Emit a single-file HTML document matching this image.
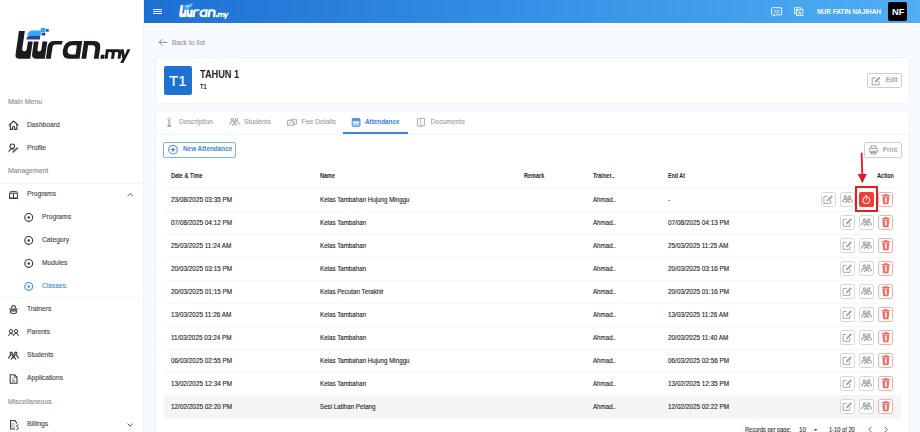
<!DOCTYPE html>
<html><head><meta charset="utf-8"><style>
html,body{margin:0;padding:0;width:920px;height:432px;overflow:hidden;background:#fff;}
body{position:relative;font-family:"Liberation Sans", sans-serif;}
.t{position:absolute;white-space:nowrap;}
.t.r{-webkit-text-stroke:0.12px currentColor;}
.b{position:absolute;}
</style></head><body>
<div id="root" style="position:relative;width:920px;height:432px;overflow:hidden;">
<div class="b" style="left:0px;top:0px;width:143px;height:432px;background:#fff;"></div>
<svg width="0" height="0" style="position:absolute"><defs>
<symbol id="logo" overflow="visible">
<g transform="translate(0,58.8) skewX(-8.3) translate(0,-58.8)">
<path d="M14.9,31 L20.8,31 L20.8,48.6 Q20.8,51.3 23.1,51.3 Q25.4,51.3 25.4,48.6 L25.4,41.6 L30.2,41.6 L30.2,58.8 L19.4,58.8 Q14.9,58.8 14.9,54.3 Z"/>
<path d="M31.4,41.6 L36.1,41.6 L36.1,49.2 Q36.1,51.6 38.05,51.6 Q40,51.6 40,49.2 L40,41.6 L44.8,41.6 L44.8,58.8 L36.4,58.8 Q31.4,58.8 31.4,53.8 Z"/>
<path d="M45.8,58.8 L45.8,46.6 Q45.8,40.9 51.5,40.9 L60.2,40.9 L59.6,44.6 L53.6,44.6 Q50.8,44.6 50.8,47.4 L50.8,58.8 Z"/>
<path fill-rule="evenodd" d="M79.6,40.9 L79.6,58.8 L69.4,58.8 Q61.6,58.8 61.6,50 Q61.6,40.9 70.4,40.9 Z M70.6,45.3 L74.9,45.3 L74.9,54.4 L70.4,54.4 Q66.3,54.4 66.3,49.85 Q66.3,45.3 70.6,45.3 Z"/>
<path d="M81.4,58.8 L81.4,40.9 L91.4,40.9 Q98.6,40.9 98.6,48.1 L98.6,58.8 L93.8,58.8 L93.8,48.8 Q93.8,45.3 90.3,45.3 L86.2,45.3 L86.2,58.8 Z"/>
<rect x="100.3" y="54.7" width="3.8" height="4.1" rx="0.6"/>
<path d="M104.6,58.8 L104.6,49.2 L116.6,49.2 Q120.5,49.2 120.5,53.1 L120.5,58.8 L117.5,58.8 L117.5,53.6 Q117.5,52.1 116,52.1 L114,52.1 L114,58.8 L111,58.8 L111,53.6 Q111,52.1 109.5,52.1 L107.6,52.1 L107.6,58.8 Z"/>
</g>
<path d="M120.4,49.2 L123.6,49.2 L124.7,55.3 L127.4,49.2 L130.5,49.2 L123.4,62.9 L120.2,62.9 L122.4,58.8 Z"/>
<path d="M32.6,30.4 L40.8,30.4 L40.8,28 L45.5,28 L45.5,32 L41,32 L41,35.5 L27,35.5 Q28.2,30.4 32.6,30.4 Z" style="fill:var(--c1);stroke:none"/>
<path d="M30.6,35.6 L40,35.6 L40,39.6 L26.2,39.6 Q27,35.6 30.6,35.6 Z" style="fill:var(--c2);stroke:none"/>
<rect x="41.6" y="32.6" width="3.7" height="2.9" style="fill:var(--c2);stroke:none"/>
<rect x="46" y="29.2" width="2.7" height="2.4" style="fill:var(--c3);stroke:none"/>
</symbol></defs></svg>
<svg class="b" style="left:0;top:0" width="143" height="80" viewBox="0 0 143 80"><use href="#logo" fill="#1c1a1e" style="--c1:#2aaef0;--c2:#2b40ad;--c3:#1d3a9c"/></svg>
<div class="t r" style="left:8px;top:95.80px;font-size:6.9px;line-height:12px;color:#8c8c8c;font-weight:400;">Main Menu</div>
<div class="t r" style="left:27px;top:118.50px;font-size:6.7px;line-height:12px;color:#474747;font-weight:400;">Dashboard</div>
<div class="t r" style="left:27px;top:141.50px;font-size:6.7px;line-height:12px;color:#474747;font-weight:400;">Profile</div>
<div class="t r" style="left:8px;top:165.30px;font-size:6.9px;line-height:12px;color:#8c8c8c;font-weight:400;">Management</div>
<div class="b" style="left:0px;top:183px;width:143px;height:1px;background:#f3f5f7;"></div>
<div class="t r" style="left:27px;top:188.40px;font-size:6.7px;line-height:12px;color:#474747;font-weight:400;">Programs</div>
<div class="t r" style="left:42px;top:211.40px;font-size:6.7px;line-height:12px;color:#474747;font-weight:400;">Programs</div>
<div class="t r" style="left:42px;top:234.40px;font-size:6.7px;line-height:12px;color:#474747;font-weight:400;">Category</div>
<div class="t r" style="left:42px;top:257.40px;font-size:6.7px;line-height:12px;color:#474747;font-weight:400;">Modules</div>
<div class="t r" style="left:42px;top:280.40px;font-size:6.7px;line-height:12px;color:#3d8fe0;font-weight:400;">Classes.</div>
<div class="b" style="left:0px;top:297px;width:143px;height:1px;background:#f3f5f7;"></div>
<div class="t r" style="left:27px;top:303.30px;font-size:6.7px;line-height:12px;color:#474747;font-weight:400;">Trainers</div>
<div class="t r" style="left:27px;top:326.30px;font-size:6.7px;line-height:12px;color:#474747;font-weight:400;">Parents</div>
<div class="t r" style="left:27px;top:349.30px;font-size:6.7px;line-height:12px;color:#474747;font-weight:400;">Students</div>
<div class="t r" style="left:27px;top:372.30px;font-size:6.7px;line-height:12px;color:#474747;font-weight:400;">Applications</div>
<div class="t r" style="left:8px;top:395.50px;font-size:6.9px;line-height:12px;color:#8c8c8c;font-weight:400;">Miscellaneous</div>
<div class="t r" style="left:27px;top:418.40px;font-size:6.7px;line-height:12px;color:#474747;font-weight:400;">Billings</div>
<div class="b" style="left:143px;top:0px;width:777px;height:432px;background:#f7fafe;"></div>
<div class="b" style="left:143px;top:0px;width:1px;height:432px;background:#eef1f5;"></div>
<div class="b" style="left:144px;top:0px;width:776px;height:23px;background:linear-gradient(90deg,#1d70d3 0%,#3591e5 50%,#50adf4 100%);"></div>
<div class="b" style="left:144px;top:23px;width:776px;height:1.5px;background:#ffffff;"></div>
<div class="b" style="left:153px;top:8.5px;width:9px;height:1.3999999999999986px;background:rgba(255,255,255,0.92);"></div>
<div class="b" style="left:153px;top:10.8px;width:9px;height:1.3999999999999986px;background:rgba(255,255,255,0.92);"></div>
<div class="b" style="left:153px;top:13.100000000000001px;width:9px;height:1.3999999999999986px;background:rgba(255,255,255,0.92);"></div>
<svg class="b" style="left:0;top:0" width="300" height="23" viewBox="0 0 300 23"><g transform="translate(172.6,-8.2) scale(0.43)"><use href="#logo" fill="#fff" stroke="#fff" stroke-width="0.6" style="--c1:#7fd0fa;--c2:#5fb8f5;--c3:#5fb8f5"/></g></svg>
<div class="t" style="left:817px;top:5.50px;font-size:6.5px;line-height:12px;color:#fff;font-weight:700;transform:scaleX(0.9849);transform-origin:0 0;">NUR FATIN NAJIHAH</div>
<div class="b" style="left:888.4px;top:1.9px;width:19.0px;height:19.0px;background:#000;border-radius:2px;"></div>
<div class="t" style="left:891.9px;top:5.80px;font-size:9.9px;line-height:12px;color:#fff;font-weight:700;transform:scaleX(0.9397);transform-origin:0 0;">NF</div>
<div class="t r" style="left:171.7px;top:36.80px;font-size:6.9px;line-height:12px;color:#9a9a9a;font-weight:400;">Back to list</div>
<div class="b" style="left:156px;top:58px;width:753px;height:44.5px;background:#fff;border-radius:3px;box-shadow:0 0 0 0.6px #e9edf2;"></div>
<div class="b" style="left:164px;top:66px;width:28px;height:29px;background:#1e73d2;border-radius:2px;"></div>
<div class="t r" style="left:169px;top:72.50px;font-size:15px;line-height:16px;color:#fff;font-weight:400;">T1</div>
<div class="t" style="left:200.4px;top:68.80px;font-size:10.2px;line-height:12px;color:#1f1f1f;font-weight:700;transform:scaleX(0.9);transform-origin:0 0;">TAHUN 1</div>
<div class="t" style="left:200.2px;top:80.90px;font-size:6.6px;line-height:12px;color:#2a2a2a;font-weight:700;transform:scaleX(0.8440);transform-origin:0 0;">T1</div>
<div class="b" style="left:866.5px;top:73px;width:35.0px;height:15px;border:1px solid #cfcfcf;border-radius:2px;box-sizing:border-box;"></div>
<div class="t" style="left:885.8px;top:74.20px;font-size:6.3px;line-height:12px;color:#a6a6a6;font-weight:700;">Edit</div>
<div class="b" style="left:156px;top:111px;width:753px;height:321px;background:#fff;border-radius:3px 3px 0 0;box-shadow:0 0 0 0.6px #e9edf2;"></div>
<div class="b" style="left:156px;top:133.5px;width:753px;height:1.0px;background:#f1f3f6;"></div>
<div class="t r" style="left:179px;top:116.30px;font-size:6.8px;line-height:12px;color:#a0a0a0;font-weight:400;">Description</div>
<div class="t r" style="left:244px;top:116.30px;font-size:6.8px;line-height:12px;color:#a0a0a0;font-weight:400;">Students</div>
<div class="t r" style="left:301.5px;top:116.30px;font-size:6.8px;line-height:12px;color:#a0a0a0;font-weight:400;">Fee Details</div>
<div class="t" style="left:365px;top:116.30px;font-size:6.5px;line-height:12px;color:#2f7fd8;font-weight:700;transform:scaleX(0.9720);transform-origin:0 0;">Attendance</div>
<div class="t r" style="left:430.5px;top:116.30px;font-size:6.8px;line-height:12px;color:#a0a0a0;font-weight:400;">Documents</div>
<div class="b" style="left:343px;top:132px;width:65px;height:2px;background:#3684dc;"></div>
<div class="b" style="left:163px;top:142px;width:73px;height:15.5px;border:1px solid #7fb2ec;border-radius:2px;box-sizing:border-box;"></div>
<div class="t" style="left:182.8px;top:143.40px;font-size:6.6px;line-height:12px;color:#3a88de;font-weight:700;transform:scaleX(0.9649);transform-origin:0 0;">New Attendance</div>
<div class="b" style="left:864px;top:142px;width:37.5px;height:15.5px;border:1px solid #cfcfcf;border-radius:2px;box-sizing:border-box;"></div>
<div class="t" style="left:882.8px;top:143.60px;font-size:6.3px;line-height:12px;color:#a6a6a6;font-weight:700;">Print</div>
<div class="t" style="left:170.8px;top:170.00px;font-size:6.4px;line-height:12px;color:#262626;font-weight:700;transform:scaleX(0.8598);transform-origin:0 0;">Date &amp; Time</div>
<div class="t" style="left:320.4px;top:170.00px;font-size:6.4px;line-height:12px;color:#262626;font-weight:700;transform:scaleX(0.8720);transform-origin:0 0;">Name</div>
<div class="t" style="left:524.4px;top:170.00px;font-size:6.4px;line-height:12px;color:#262626;font-weight:700;transform:scaleX(0.8645);transform-origin:0 0;">Remark</div>
<div class="t" style="left:593px;top:170.00px;font-size:6.4px;line-height:12px;color:#262626;font-weight:700;transform:scaleX(0.8718);transform-origin:0 0;">Trainer..</div>
<div class="t" style="left:668px;top:170.00px;font-size:6.4px;line-height:12px;color:#262626;font-weight:700;transform:scaleX(0.8341);transform-origin:0 0;">End At</div>
<div class="t" style="right:26px;top:170.00px;font-size:6.4px;line-height:12px;color:#262626;font-weight:700;transform:scaleX(0.8539);transform-origin:100% 0;">Action</div>
<div class="b" style="left:164px;top:187.5px;width:737px;height:1.0px;background:#f5f5f5;"></div>
<div class="b" style="left:164px;top:210.5px;width:737px;height:1.0px;background:#f6f6f6;"></div>
<div class="t r" style="left:171px;top:193.50px;font-size:6.4px;line-height:12px;color:#1e1e1e;font-weight:400;">23/08/2025 03:35 PM</div>
<div class="t r" style="left:320.4px;top:193.50px;font-size:7px;line-height:12px;color:#1e1e1e;font-weight:400;transform:scaleX(0.8860);transform-origin:0 0;">Kelas Tambahan Hujung Minggu</div>
<div class="t r" style="left:593px;top:193.50px;font-size:7px;line-height:12px;color:#1e1e1e;font-weight:400;transform:scaleX(0.8823);transform-origin:0 0;">Ahmad..</div>
<div class="t r" style="left:668px;top:193.50px;font-size:6.4px;line-height:12px;color:#1e1e1e;font-weight:400;">-</div>
<div class="b" style="left:820.5px;top:191.55px;width:15.299999999999955px;height:15.300000000000011px;background:#fff;border:1.2px solid #d6d6d6;border-radius:2.5px;box-sizing:border-box;"></div>
<div class="b" style="left:839.7px;top:191.55px;width:15.299999999999955px;height:15.300000000000011px;background:#fff;border:1.2px solid #d6d6d6;border-radius:2.5px;box-sizing:border-box;"></div>
<div class="b" style="left:858.8px;top:191.55px;width:15.299999999999955px;height:15.300000000000011px;background:#ea4036;border-radius:2px;"></div>
<div class="b" style="left:878px;top:191.55px;width:15.299999999999955px;height:15.300000000000011px;background:#fff;border:1.2px solid #f7aaa6;border-radius:2.5px;box-sizing:border-box;"></div>
<div class="b" style="left:164px;top:233.5px;width:737px;height:1.0px;background:#f6f6f6;"></div>
<div class="t r" style="left:171px;top:216.50px;font-size:6.4px;line-height:12px;color:#1e1e1e;font-weight:400;">07/08/2025 04:12 PM</div>
<div class="t r" style="left:320.4px;top:216.50px;font-size:7px;line-height:12px;color:#1e1e1e;font-weight:400;transform:scaleX(0.8860);transform-origin:0 0;">Kelas Tambahan</div>
<div class="t r" style="left:593px;top:216.50px;font-size:7px;line-height:12px;color:#1e1e1e;font-weight:400;transform:scaleX(0.8823);transform-origin:0 0;">Ahmad..</div>
<div class="t r" style="left:668px;top:216.50px;font-size:6.4px;line-height:12px;color:#1e1e1e;font-weight:400;">07/08/2025 04:13 PM</div>
<div class="b" style="left:839.7px;top:214.55px;width:15.299999999999955px;height:15.300000000000011px;background:#fff;border:1.2px solid #d6d6d6;border-radius:2.5px;box-sizing:border-box;"></div>
<div class="b" style="left:858.8px;top:214.55px;width:15.299999999999955px;height:15.300000000000011px;background:#fff;border:1.2px solid #d6d6d6;border-radius:2.5px;box-sizing:border-box;"></div>
<div class="b" style="left:878px;top:214.55px;width:15.299999999999955px;height:15.300000000000011px;background:#fff;border:1.2px solid #f7aaa6;border-radius:2.5px;box-sizing:border-box;"></div>
<div class="b" style="left:164px;top:256.5px;width:737px;height:1.0px;background:#f6f6f6;"></div>
<div class="t r" style="left:171px;top:239.50px;font-size:6.4px;line-height:12px;color:#1e1e1e;font-weight:400;">25/03/2025 11:24 AM</div>
<div class="t r" style="left:320.4px;top:239.50px;font-size:7px;line-height:12px;color:#1e1e1e;font-weight:400;transform:scaleX(0.8860);transform-origin:0 0;">Kelas Tambahan</div>
<div class="t r" style="left:593px;top:239.50px;font-size:7px;line-height:12px;color:#1e1e1e;font-weight:400;transform:scaleX(0.8823);transform-origin:0 0;">Ahmad..</div>
<div class="t r" style="left:668px;top:239.50px;font-size:6.4px;line-height:12px;color:#1e1e1e;font-weight:400;">25/03/2025 11:25 AM</div>
<div class="b" style="left:839.7px;top:237.55px;width:15.299999999999955px;height:15.300000000000011px;background:#fff;border:1.2px solid #d6d6d6;border-radius:2.5px;box-sizing:border-box;"></div>
<div class="b" style="left:858.8px;top:237.55px;width:15.299999999999955px;height:15.300000000000011px;background:#fff;border:1.2px solid #d6d6d6;border-radius:2.5px;box-sizing:border-box;"></div>
<div class="b" style="left:878px;top:237.55px;width:15.299999999999955px;height:15.300000000000011px;background:#fff;border:1.2px solid #f7aaa6;border-radius:2.5px;box-sizing:border-box;"></div>
<div class="b" style="left:164px;top:279.5px;width:737px;height:1.0px;background:#f6f6f6;"></div>
<div class="t r" style="left:171px;top:262.50px;font-size:6.4px;line-height:12px;color:#1e1e1e;font-weight:400;">20/03/2025 03:15 PM</div>
<div class="t r" style="left:320.4px;top:262.50px;font-size:7px;line-height:12px;color:#1e1e1e;font-weight:400;transform:scaleX(0.8860);transform-origin:0 0;">Kelas Tambahan</div>
<div class="t r" style="left:593px;top:262.50px;font-size:7px;line-height:12px;color:#1e1e1e;font-weight:400;transform:scaleX(0.8823);transform-origin:0 0;">Ahmad..</div>
<div class="t r" style="left:668px;top:262.50px;font-size:6.4px;line-height:12px;color:#1e1e1e;font-weight:400;">20/03/2025 03:16 PM</div>
<div class="b" style="left:839.7px;top:260.55px;width:15.299999999999955px;height:15.300000000000011px;background:#fff;border:1.2px solid #d6d6d6;border-radius:2.5px;box-sizing:border-box;"></div>
<div class="b" style="left:858.8px;top:260.55px;width:15.299999999999955px;height:15.300000000000011px;background:#fff;border:1.2px solid #d6d6d6;border-radius:2.5px;box-sizing:border-box;"></div>
<div class="b" style="left:878px;top:260.55px;width:15.299999999999955px;height:15.300000000000011px;background:#fff;border:1.2px solid #f7aaa6;border-radius:2.5px;box-sizing:border-box;"></div>
<div class="b" style="left:164px;top:302.5px;width:737px;height:1.0px;background:#f6f6f6;"></div>
<div class="t r" style="left:171px;top:285.50px;font-size:6.4px;line-height:12px;color:#1e1e1e;font-weight:400;">20/03/2025 01:15 PM</div>
<div class="t r" style="left:320.4px;top:285.50px;font-size:7px;line-height:12px;color:#1e1e1e;font-weight:400;transform:scaleX(0.8860);transform-origin:0 0;">Kelas Pecutan Terakhir</div>
<div class="t r" style="left:593px;top:285.50px;font-size:7px;line-height:12px;color:#1e1e1e;font-weight:400;transform:scaleX(0.8823);transform-origin:0 0;">Ahmad..</div>
<div class="t r" style="left:668px;top:285.50px;font-size:6.4px;line-height:12px;color:#1e1e1e;font-weight:400;">20/03/2025 01:16 PM</div>
<div class="b" style="left:839.7px;top:283.55px;width:15.299999999999955px;height:15.300000000000011px;background:#fff;border:1.2px solid #d6d6d6;border-radius:2.5px;box-sizing:border-box;"></div>
<div class="b" style="left:858.8px;top:283.55px;width:15.299999999999955px;height:15.300000000000011px;background:#fff;border:1.2px solid #d6d6d6;border-radius:2.5px;box-sizing:border-box;"></div>
<div class="b" style="left:878px;top:283.55px;width:15.299999999999955px;height:15.300000000000011px;background:#fff;border:1.2px solid #f7aaa6;border-radius:2.5px;box-sizing:border-box;"></div>
<div class="b" style="left:164px;top:325.5px;width:737px;height:1.0px;background:#f6f6f6;"></div>
<div class="t r" style="left:171px;top:308.50px;font-size:6.4px;line-height:12px;color:#1e1e1e;font-weight:400;">13/03/2025 11:26 AM</div>
<div class="t r" style="left:320.4px;top:308.50px;font-size:7px;line-height:12px;color:#1e1e1e;font-weight:400;transform:scaleX(0.8860);transform-origin:0 0;">Kelas Tambahan</div>
<div class="t r" style="left:593px;top:308.50px;font-size:7px;line-height:12px;color:#1e1e1e;font-weight:400;transform:scaleX(0.8823);transform-origin:0 0;">Ahmad..</div>
<div class="t r" style="left:668px;top:308.50px;font-size:6.4px;line-height:12px;color:#1e1e1e;font-weight:400;">13/03/2025 11:26 AM</div>
<div class="b" style="left:839.7px;top:306.55px;width:15.299999999999955px;height:15.300000000000011px;background:#fff;border:1.2px solid #d6d6d6;border-radius:2.5px;box-sizing:border-box;"></div>
<div class="b" style="left:858.8px;top:306.55px;width:15.299999999999955px;height:15.300000000000011px;background:#fff;border:1.2px solid #d6d6d6;border-radius:2.5px;box-sizing:border-box;"></div>
<div class="b" style="left:878px;top:306.55px;width:15.299999999999955px;height:15.300000000000011px;background:#fff;border:1.2px solid #f7aaa6;border-radius:2.5px;box-sizing:border-box;"></div>
<div class="b" style="left:164px;top:348.5px;width:737px;height:1.0px;background:#f6f6f6;"></div>
<div class="t r" style="left:171px;top:331.50px;font-size:6.4px;line-height:12px;color:#1e1e1e;font-weight:400;">11/03/2025 03:24 PM</div>
<div class="t r" style="left:320.4px;top:331.50px;font-size:7px;line-height:12px;color:#1e1e1e;font-weight:400;transform:scaleX(0.8860);transform-origin:0 0;">Kelas Tambahan</div>
<div class="t r" style="left:593px;top:331.50px;font-size:7px;line-height:12px;color:#1e1e1e;font-weight:400;transform:scaleX(0.8823);transform-origin:0 0;">Ahmad..</div>
<div class="t r" style="left:668px;top:331.50px;font-size:6.4px;line-height:12px;color:#1e1e1e;font-weight:400;">20/03/2025 11:40 AM</div>
<div class="b" style="left:839.7px;top:329.55px;width:15.299999999999955px;height:15.300000000000011px;background:#fff;border:1.2px solid #d6d6d6;border-radius:2.5px;box-sizing:border-box;"></div>
<div class="b" style="left:858.8px;top:329.55px;width:15.299999999999955px;height:15.300000000000011px;background:#fff;border:1.2px solid #d6d6d6;border-radius:2.5px;box-sizing:border-box;"></div>
<div class="b" style="left:878px;top:329.55px;width:15.299999999999955px;height:15.300000000000011px;background:#fff;border:1.2px solid #f7aaa6;border-radius:2.5px;box-sizing:border-box;"></div>
<div class="b" style="left:164px;top:371.5px;width:737px;height:1.0px;background:#f6f6f6;"></div>
<div class="t r" style="left:171px;top:354.50px;font-size:6.4px;line-height:12px;color:#1e1e1e;font-weight:400;">06/03/2025 02:55 PM</div>
<div class="t r" style="left:320.4px;top:354.50px;font-size:7px;line-height:12px;color:#1e1e1e;font-weight:400;transform:scaleX(0.8860);transform-origin:0 0;">Kelas Tambahan Hujung Minggu</div>
<div class="t r" style="left:593px;top:354.50px;font-size:7px;line-height:12px;color:#1e1e1e;font-weight:400;transform:scaleX(0.8823);transform-origin:0 0;">Ahmad..</div>
<div class="t r" style="left:668px;top:354.50px;font-size:6.4px;line-height:12px;color:#1e1e1e;font-weight:400;">06/03/2025 02:56 PM</div>
<div class="b" style="left:839.7px;top:352.55px;width:15.299999999999955px;height:15.300000000000011px;background:#fff;border:1.2px solid #d6d6d6;border-radius:2.5px;box-sizing:border-box;"></div>
<div class="b" style="left:858.8px;top:352.55px;width:15.299999999999955px;height:15.300000000000011px;background:#fff;border:1.2px solid #d6d6d6;border-radius:2.5px;box-sizing:border-box;"></div>
<div class="b" style="left:878px;top:352.55px;width:15.299999999999955px;height:15.300000000000011px;background:#fff;border:1.2px solid #f7aaa6;border-radius:2.5px;box-sizing:border-box;"></div>
<div class="b" style="left:164px;top:394.5px;width:737px;height:1.0px;background:#f6f6f6;"></div>
<div class="t r" style="left:171px;top:377.50px;font-size:6.4px;line-height:12px;color:#1e1e1e;font-weight:400;">13/02/2025 12:34 PM</div>
<div class="t r" style="left:320.4px;top:377.50px;font-size:7px;line-height:12px;color:#1e1e1e;font-weight:400;transform:scaleX(0.8860);transform-origin:0 0;">Kelas Tambahan</div>
<div class="t r" style="left:593px;top:377.50px;font-size:7px;line-height:12px;color:#1e1e1e;font-weight:400;transform:scaleX(0.8823);transform-origin:0 0;">Ahmad..</div>
<div class="t r" style="left:668px;top:377.50px;font-size:6.4px;line-height:12px;color:#1e1e1e;font-weight:400;">13/02/2025 12:35 PM</div>
<div class="b" style="left:839.7px;top:375.55px;width:15.299999999999955px;height:15.300000000000011px;background:#fff;border:1.2px solid #d6d6d6;border-radius:2.5px;box-sizing:border-box;"></div>
<div class="b" style="left:858.8px;top:375.55px;width:15.299999999999955px;height:15.300000000000011px;background:#fff;border:1.2px solid #d6d6d6;border-radius:2.5px;box-sizing:border-box;"></div>
<div class="b" style="left:878px;top:375.55px;width:15.299999999999955px;height:15.300000000000011px;background:#fff;border:1.2px solid #f7aaa6;border-radius:2.5px;box-sizing:border-box;"></div>
<div class="b" style="left:163.5px;top:395px;width:737.5px;height:23.5px;background:#f5f5f5;"></div>
<div class="t r" style="left:171px;top:400.50px;font-size:6.4px;line-height:12px;color:#1e1e1e;font-weight:400;">12/02/2025 02:20 PM</div>
<div class="t r" style="left:320.4px;top:400.50px;font-size:7px;line-height:12px;color:#1e1e1e;font-weight:400;transform:scaleX(0.8860);transform-origin:0 0;">Sesi Latihan Petang</div>
<div class="t r" style="left:593px;top:400.50px;font-size:7px;line-height:12px;color:#1e1e1e;font-weight:400;transform:scaleX(0.8823);transform-origin:0 0;">Ahmad..</div>
<div class="t r" style="left:668px;top:400.50px;font-size:6.4px;line-height:12px;color:#1e1e1e;font-weight:400;">12/02/2025 02:22 PM</div>
<div class="b" style="left:839.7px;top:398.55px;width:15.299999999999955px;height:15.300000000000011px;background:#fff;border:1.2px solid #d6d6d6;border-radius:2.5px;box-sizing:border-box;"></div>
<div class="b" style="left:858.8px;top:398.55px;width:15.299999999999955px;height:15.300000000000011px;background:#fff;border:1.2px solid #d6d6d6;border-radius:2.5px;box-sizing:border-box;"></div>
<div class="b" style="left:878px;top:398.55px;width:15.299999999999955px;height:15.300000000000011px;background:#fff;border:1.2px solid #f7aaa6;border-radius:2.5px;box-sizing:border-box;"></div>
<div class="b" style="left:855px;top:186.2px;width:23px;height:25.600000000000023px;border:2.2px solid #dc1f27;box-sizing:border-box;"></div>
<div class="t r" style="left:745.2px;top:423.80px;font-size:6.3px;line-height:12px;color:#333;font-weight:400;transform:scaleX(0.8895);transform-origin:0 0;">Records per page:</div>
<div class="t r" style="left:799.4px;top:423.60px;font-size:6.8px;line-height:12px;color:#333;font-weight:400;transform:scaleX(0.9256);transform-origin:0 0;">10</div>
<div class="t r" style="left:829px;top:423.80px;font-size:6.3px;line-height:12px;color:#333;font-weight:400;transform:scaleX(0.9095);transform-origin:0 0;">1-10 of 20</div>
<svg class="b" style="left:0;top:0" width="920" height="432" viewBox="0 0 920 432"><g fill="none" stroke="#3a3a3a" stroke-width="1.15" stroke-linejoin="round" stroke-linecap="round"><path d="M9.2,125.2 L13.6,121 L18,125.2"/><path d="M10.3,124.3 V129.4 H12.6 V127.2 Q12.6,126.2 13.6,126.2 Q14.6,126.2 14.6,127.2 V129.4 H16.9 V124.3"/></g><g fill="none" stroke="#3a3a3a" stroke-linecap="round"><circle cx="12.3" cy="146.3" r="2.3" stroke-width="1.05"/><path d="M9,151.4 Q9.8,149 12.4,148.8 L13.6,148.9" stroke-width="1.05"/><path d="M13.3,151.8 L17.2,148.2" stroke="#555" stroke-width="1.7"/></g><g fill="none" stroke="#3a3a3a" stroke-width="1"><path d="M9.6,192.1 Q13.5,190.4 17.4,192.1"/><rect x="9.6" y="193.2" width="7.8" height="5"/><path d="M13.5,193.2 V198.8"/></g><path d="M9.2,197.6 H17.8 V198.7 H9.2 Z" fill="#3a3a3a"/><circle cx="28.7" cy="217.4" r="3.9" fill="none" stroke="#3a3a3a" stroke-width="1.15"/><circle cx="28.7" cy="217.4" r="1.25" fill="#3a3a3a"/><circle cx="28.7" cy="240.4" r="3.9" fill="none" stroke="#3a3a3a" stroke-width="1.15"/><circle cx="28.7" cy="240.4" r="1.25" fill="#3a3a3a"/><circle cx="28.7" cy="263.4" r="3.9" fill="none" stroke="#3a3a3a" stroke-width="1.15"/><circle cx="28.7" cy="263.4" r="1.25" fill="#3a3a3a"/><circle cx="28.7" cy="286.4" r="3.9" fill="none" stroke="#3d8fe0" stroke-width="1.15"/><circle cx="28.7" cy="286.4" r="1.25" fill="#3d8fe0"/><path d="M127.6,196.1 L130.2,193.5 L132.8,196.1" fill="none" stroke="#3a3a3a" stroke-width="0.9"/><path d="M127.6,423.6 L130.2,426.2 L132.8,423.6" fill="none" stroke="#3a3a3a" stroke-width="0.9"/><g fill="none" stroke="#3a3a3a" stroke-width="1.1"><path d="M11.4,308.4 Q11.6,305.5 13.5,305.5 Q15.4,305.5 15.6,308.4"/><path d="M9.3,309.2 H17.7" stroke-width="1.2"/><path d="M10.1,310.9 H16.9 M10.3,310.9 L10.7,312.7 Q11.1,313.5 13.5,313.5 Q15.9,313.5 16.3,312.7 L16.7,310.9"/></g><g fill="none" stroke="#3a3a3a" stroke-width="1"><circle cx="11" cy="331.2" r="1.7"/><circle cx="16" cy="331.2" r="1.7"/><path d="M8.6,335.9 Q9.2,333.2 11,333.2 Q12.6,333.2 13.5,335.6 Q14.4,333.2 16,333.2 Q17.8,333.2 18.4,335.9"/></g><g fill="none" stroke="#3a3a3a" stroke-width="1.15"><circle cx="11.2" cy="353.2" r="1.15"/><circle cx="15.8" cy="353.2" r="1.15"/><circle cx="13.5" cy="355.6" r="1.05"/><path d="M8.7,358.6 Q9.2,355.5 11.3,355.3 M18.3,358.6 Q17.8,355.5 15.7,355.3 M11.2,359.6 Q11.6,357.3 13.5,357.3 Q15.4,357.3 15.8,359.6"/></g><g fill="none" stroke="#3a3a3a" stroke-width="1.1" stroke-linejoin="round"><path d="M10.2,374.8 H14.6 L17,377.2 V383.2 H10.2 Z"/><path d="M14.4,374.8 V377.4 H17" stroke-width="0.7"/><path d="M12,378.6 H13.6 M12,380.2 H15.2 M12,381.8 H15.2" stroke-width="0.6"/></g><g fill="none" stroke="#3a3a3a" stroke-width="1.1" stroke-linejoin="round"><path d="M16.6,423.6 V422.6 L14.6,420.5 H10.6 V429 H15.2"/><path d="M12.2,423.6 H14.2 V427.2 H12.2 Z" stroke="#999" stroke-width="0.7"/><path d="M18.4,424.8 Q16.6,425 16.6,426 Q16.6,427 17.6,427.2 Q18.6,427.5 18.4,428.6 Q18.2,429.6 16.4,429.6" stroke-width="1"/></g><g fill="none" stroke="#ffffff" stroke-width="0.95" opacity="0.95"><path d="M772.3,7.7 H780.9 Q781.6,7.7 781.6,8.4 V14.1 Q781.6,14.8 780.9,14.8 H775.4 L773.7,16.2 V14.8 H772.3 Q771.6,14.8 771.6,14.1 V8.4 Q771.6,7.7 772.3,7.7 Z"/></g><path d="M773.8,10.6 H776.6 M777.2,10.6 H779.4 M773.8,12.2 H779.4" stroke="#ffffff" stroke-width="0.9" opacity="0.75"/><g fill="none" stroke="#ffffff" stroke-width="0.9" opacity="0.95"><path d="M796.6,13.8 H794.6 V7.7 H800.8 V9.3"/><rect x="796.6" y="9.3" width="6.2" height="6.3"/><path d="M795.8,9.6 H798.4 M797.1,9 V12.2 M795.9,12 Q797.4,11.2 798,9.8" stroke-width="0.65"/><path d="M798.6,14.6 L799.8,10.8 L801,14.6 M799,13.4 H800.6" stroke-width="0.7"/></g><g fill="none" stroke="#8f8f8f" stroke-width="1" stroke-linecap="round" stroke-linejoin="round"><path d="M159.2,42.4 H167 M162.2,39.4 L159.2,42.4 L162.2,45.4"/></g><g transform="translate(871.8,77.1) scale(1.0)" fill="none" stroke="#9b9b9b" stroke-width="0.9" stroke-linejoin="round"><path d="M4.2,0.8 H0.4 V7.8 H7.2 V4.2"/><path d="M3.2,5.2 L3.5,3.8 L7.4,-0.1 L8.4,0.9 L4.5,4.8 Z" fill="#9b9b9b" stroke-width="0.5"/></g><g fill="none" stroke="#9b9b9b" stroke-width="1" stroke-linejoin="round"><path d="M871,148.4 V145.9 H876 V148.4"/><rect x="869.4" y="148.4" width="8.2" height="4" rx="1"/><path d="M871,151.2 V154 H876 V151.2 Z"/></g><circle cx="173" cy="149.7" r="4.3" fill="none" stroke="#3f8ae0" stroke-width="1.05"/><path d="M173,147.6 V151.8 M170.9,149.7 H175.1" stroke="#3f8ae0" stroke-width="1.3"/><g fill="none" stroke="#ababab" stroke-width="0.95"><circle cx="169.2" cy="119.4" r="1.25"/><path d="M168.4,121.4 H170 V124.4 H168.4 Z" stroke-width="0.8"/></g><path d="M167.5,124.9 H170.9 V127 H167.5 Z" fill="#ababab"/><g fill="none" stroke="#ababab" stroke-width="1.15"><circle cx="232.4" cy="119.6" r="1.15"/><circle cx="236.5" cy="119.6" r="1.15"/><circle cx="234.45" cy="122.1" r="1"/><path d="M229.8,124.7 Q230.1,121.8 232.4,121.7 M239.1,124.7 Q238.8,121.8 236.5,121.7 M232.3,125.9 Q232.7,123.8 234.45,123.8 Q236.2,123.8 236.6,125.9"/></g><g fill="none" stroke="#ababab" stroke-width="0.95"><path d="M287.4,120.3 L293.2,120.3 L293.2,125.4 L287.4,125.4 Z"/><path d="M290.4,119.3 H296.6 V124.4 H293.2"/><path d="M288.6,124.4 L291.8,121.2 M292.6,123.2 Q294.8,123.4 295,121.2"/></g><rect x="352.2" y="118.6" width="7.8" height="7.8" rx="0.9" fill="#a9cdf3" stroke="#4a90e2" stroke-width="0.95"/><rect x="352.2" y="118.6" width="7.8" height="2.2" fill="#4a90e2"/><rect x="353.6" y="121.8" width="5" height="1.4" fill="#ffffff" opacity="0.9"/><g fill="none" stroke="#ababab" stroke-width="0.95" stroke-linejoin="round"><path d="M417.5,118.4 H424.4 V125.6 H420.8 V127 L417.5,126 Z"/><path d="M420.8,118.6 L420,121.4 L420.8,123.2 V125.8" stroke-width="0.8"/></g><g transform="translate(820.5,191.55)" fill="none" stroke="#a3a3a3" stroke-width="0.95" stroke-linejoin="round"><path d="M7,4.9 H3.4 V11.8 H10.2 V8.4"/><path d="M6.4,9.6 L6.8,8.1 L10.9,4 L12,5.1 L7.9,9.2 Z" fill="#a3a3a3" stroke-width="0.5"/></g><g transform="translate(839.7,191.55)" fill="none" stroke="#aaaaaa" stroke-width="1.3"><circle cx="5.6" cy="5.4" r="1.15"/><circle cx="10" cy="5.4" r="1.15"/><circle cx="7.8" cy="7.8" r="1"/><path d="M3,10.9 Q3.2,7.8 5.6,7.6 Q6.4,7.6 6.8,8.2 M12.6,10.9 Q12.4,7.8 10,7.6 Q9.2,7.6 8.8,8.2 M5.4,11.6 Q5.8,9.7 7.8,9.7 Q9.8,9.7 10.2,11.6"/></g><g transform="translate(858.8,191.55)" fill="none" stroke="#fff" stroke-width="1"><circle cx="7.5" cy="8.7" r="3.4"/><path d="M6.6,4.3 H8.4 M7.5,4.3 V5.3 M7.5,6.9 V8.9"/></g><g transform="translate(878,191.55)"><path d="M3.8,4.1 H11.9" stroke="#f0544c" stroke-width="1"/><path d="M6.5,3.6 V3 H9.2 V3.6" fill="none" stroke="#f0544c" stroke-width="0.8"/><path d="M4.3,5 H11.4 L10.5,12.6 H5.2 Z" fill="#f26a62"/><rect x="6.9" y="6" width="1.9" height="5" fill="#fff" opacity="0.85"/></g><g transform="translate(839.7,214.55)" fill="none" stroke="#a3a3a3" stroke-width="0.95" stroke-linejoin="round"><path d="M7,4.9 H3.4 V11.8 H10.2 V8.4"/><path d="M6.4,9.6 L6.8,8.1 L10.9,4 L12,5.1 L7.9,9.2 Z" fill="#a3a3a3" stroke-width="0.5"/></g><g transform="translate(858.8,214.55)" fill="none" stroke="#aaaaaa" stroke-width="1.3"><circle cx="5.6" cy="5.4" r="1.15"/><circle cx="10" cy="5.4" r="1.15"/><circle cx="7.8" cy="7.8" r="1"/><path d="M3,10.9 Q3.2,7.8 5.6,7.6 Q6.4,7.6 6.8,8.2 M12.6,10.9 Q12.4,7.8 10,7.6 Q9.2,7.6 8.8,8.2 M5.4,11.6 Q5.8,9.7 7.8,9.7 Q9.8,9.7 10.2,11.6"/></g><g transform="translate(878,214.55)"><path d="M3.8,4.1 H11.9" stroke="#f0544c" stroke-width="1"/><path d="M6.5,3.6 V3 H9.2 V3.6" fill="none" stroke="#f0544c" stroke-width="0.8"/><path d="M4.3,5 H11.4 L10.5,12.6 H5.2 Z" fill="#f26a62"/><rect x="6.9" y="6" width="1.9" height="5" fill="#fff" opacity="0.85"/></g><g transform="translate(839.7,237.55)" fill="none" stroke="#a3a3a3" stroke-width="0.95" stroke-linejoin="round"><path d="M7,4.9 H3.4 V11.8 H10.2 V8.4"/><path d="M6.4,9.6 L6.8,8.1 L10.9,4 L12,5.1 L7.9,9.2 Z" fill="#a3a3a3" stroke-width="0.5"/></g><g transform="translate(858.8,237.55)" fill="none" stroke="#aaaaaa" stroke-width="1.3"><circle cx="5.6" cy="5.4" r="1.15"/><circle cx="10" cy="5.4" r="1.15"/><circle cx="7.8" cy="7.8" r="1"/><path d="M3,10.9 Q3.2,7.8 5.6,7.6 Q6.4,7.6 6.8,8.2 M12.6,10.9 Q12.4,7.8 10,7.6 Q9.2,7.6 8.8,8.2 M5.4,11.6 Q5.8,9.7 7.8,9.7 Q9.8,9.7 10.2,11.6"/></g><g transform="translate(878,237.55)"><path d="M3.8,4.1 H11.9" stroke="#f0544c" stroke-width="1"/><path d="M6.5,3.6 V3 H9.2 V3.6" fill="none" stroke="#f0544c" stroke-width="0.8"/><path d="M4.3,5 H11.4 L10.5,12.6 H5.2 Z" fill="#f26a62"/><rect x="6.9" y="6" width="1.9" height="5" fill="#fff" opacity="0.85"/></g><g transform="translate(839.7,260.55)" fill="none" stroke="#a3a3a3" stroke-width="0.95" stroke-linejoin="round"><path d="M7,4.9 H3.4 V11.8 H10.2 V8.4"/><path d="M6.4,9.6 L6.8,8.1 L10.9,4 L12,5.1 L7.9,9.2 Z" fill="#a3a3a3" stroke-width="0.5"/></g><g transform="translate(858.8,260.55)" fill="none" stroke="#aaaaaa" stroke-width="1.3"><circle cx="5.6" cy="5.4" r="1.15"/><circle cx="10" cy="5.4" r="1.15"/><circle cx="7.8" cy="7.8" r="1"/><path d="M3,10.9 Q3.2,7.8 5.6,7.6 Q6.4,7.6 6.8,8.2 M12.6,10.9 Q12.4,7.8 10,7.6 Q9.2,7.6 8.8,8.2 M5.4,11.6 Q5.8,9.7 7.8,9.7 Q9.8,9.7 10.2,11.6"/></g><g transform="translate(878,260.55)"><path d="M3.8,4.1 H11.9" stroke="#f0544c" stroke-width="1"/><path d="M6.5,3.6 V3 H9.2 V3.6" fill="none" stroke="#f0544c" stroke-width="0.8"/><path d="M4.3,5 H11.4 L10.5,12.6 H5.2 Z" fill="#f26a62"/><rect x="6.9" y="6" width="1.9" height="5" fill="#fff" opacity="0.85"/></g><g transform="translate(839.7,283.55)" fill="none" stroke="#a3a3a3" stroke-width="0.95" stroke-linejoin="round"><path d="M7,4.9 H3.4 V11.8 H10.2 V8.4"/><path d="M6.4,9.6 L6.8,8.1 L10.9,4 L12,5.1 L7.9,9.2 Z" fill="#a3a3a3" stroke-width="0.5"/></g><g transform="translate(858.8,283.55)" fill="none" stroke="#aaaaaa" stroke-width="1.3"><circle cx="5.6" cy="5.4" r="1.15"/><circle cx="10" cy="5.4" r="1.15"/><circle cx="7.8" cy="7.8" r="1"/><path d="M3,10.9 Q3.2,7.8 5.6,7.6 Q6.4,7.6 6.8,8.2 M12.6,10.9 Q12.4,7.8 10,7.6 Q9.2,7.6 8.8,8.2 M5.4,11.6 Q5.8,9.7 7.8,9.7 Q9.8,9.7 10.2,11.6"/></g><g transform="translate(878,283.55)"><path d="M3.8,4.1 H11.9" stroke="#f0544c" stroke-width="1"/><path d="M6.5,3.6 V3 H9.2 V3.6" fill="none" stroke="#f0544c" stroke-width="0.8"/><path d="M4.3,5 H11.4 L10.5,12.6 H5.2 Z" fill="#f26a62"/><rect x="6.9" y="6" width="1.9" height="5" fill="#fff" opacity="0.85"/></g><g transform="translate(839.7,306.55)" fill="none" stroke="#a3a3a3" stroke-width="0.95" stroke-linejoin="round"><path d="M7,4.9 H3.4 V11.8 H10.2 V8.4"/><path d="M6.4,9.6 L6.8,8.1 L10.9,4 L12,5.1 L7.9,9.2 Z" fill="#a3a3a3" stroke-width="0.5"/></g><g transform="translate(858.8,306.55)" fill="none" stroke="#aaaaaa" stroke-width="1.3"><circle cx="5.6" cy="5.4" r="1.15"/><circle cx="10" cy="5.4" r="1.15"/><circle cx="7.8" cy="7.8" r="1"/><path d="M3,10.9 Q3.2,7.8 5.6,7.6 Q6.4,7.6 6.8,8.2 M12.6,10.9 Q12.4,7.8 10,7.6 Q9.2,7.6 8.8,8.2 M5.4,11.6 Q5.8,9.7 7.8,9.7 Q9.8,9.7 10.2,11.6"/></g><g transform="translate(878,306.55)"><path d="M3.8,4.1 H11.9" stroke="#f0544c" stroke-width="1"/><path d="M6.5,3.6 V3 H9.2 V3.6" fill="none" stroke="#f0544c" stroke-width="0.8"/><path d="M4.3,5 H11.4 L10.5,12.6 H5.2 Z" fill="#f26a62"/><rect x="6.9" y="6" width="1.9" height="5" fill="#fff" opacity="0.85"/></g><g transform="translate(839.7,329.55)" fill="none" stroke="#a3a3a3" stroke-width="0.95" stroke-linejoin="round"><path d="M7,4.9 H3.4 V11.8 H10.2 V8.4"/><path d="M6.4,9.6 L6.8,8.1 L10.9,4 L12,5.1 L7.9,9.2 Z" fill="#a3a3a3" stroke-width="0.5"/></g><g transform="translate(858.8,329.55)" fill="none" stroke="#aaaaaa" stroke-width="1.3"><circle cx="5.6" cy="5.4" r="1.15"/><circle cx="10" cy="5.4" r="1.15"/><circle cx="7.8" cy="7.8" r="1"/><path d="M3,10.9 Q3.2,7.8 5.6,7.6 Q6.4,7.6 6.8,8.2 M12.6,10.9 Q12.4,7.8 10,7.6 Q9.2,7.6 8.8,8.2 M5.4,11.6 Q5.8,9.7 7.8,9.7 Q9.8,9.7 10.2,11.6"/></g><g transform="translate(878,329.55)"><path d="M3.8,4.1 H11.9" stroke="#f0544c" stroke-width="1"/><path d="M6.5,3.6 V3 H9.2 V3.6" fill="none" stroke="#f0544c" stroke-width="0.8"/><path d="M4.3,5 H11.4 L10.5,12.6 H5.2 Z" fill="#f26a62"/><rect x="6.9" y="6" width="1.9" height="5" fill="#fff" opacity="0.85"/></g><g transform="translate(839.7,352.55)" fill="none" stroke="#a3a3a3" stroke-width="0.95" stroke-linejoin="round"><path d="M7,4.9 H3.4 V11.8 H10.2 V8.4"/><path d="M6.4,9.6 L6.8,8.1 L10.9,4 L12,5.1 L7.9,9.2 Z" fill="#a3a3a3" stroke-width="0.5"/></g><g transform="translate(858.8,352.55)" fill="none" stroke="#aaaaaa" stroke-width="1.3"><circle cx="5.6" cy="5.4" r="1.15"/><circle cx="10" cy="5.4" r="1.15"/><circle cx="7.8" cy="7.8" r="1"/><path d="M3,10.9 Q3.2,7.8 5.6,7.6 Q6.4,7.6 6.8,8.2 M12.6,10.9 Q12.4,7.8 10,7.6 Q9.2,7.6 8.8,8.2 M5.4,11.6 Q5.8,9.7 7.8,9.7 Q9.8,9.7 10.2,11.6"/></g><g transform="translate(878,352.55)"><path d="M3.8,4.1 H11.9" stroke="#f0544c" stroke-width="1"/><path d="M6.5,3.6 V3 H9.2 V3.6" fill="none" stroke="#f0544c" stroke-width="0.8"/><path d="M4.3,5 H11.4 L10.5,12.6 H5.2 Z" fill="#f26a62"/><rect x="6.9" y="6" width="1.9" height="5" fill="#fff" opacity="0.85"/></g><g transform="translate(839.7,375.55)" fill="none" stroke="#a3a3a3" stroke-width="0.95" stroke-linejoin="round"><path d="M7,4.9 H3.4 V11.8 H10.2 V8.4"/><path d="M6.4,9.6 L6.8,8.1 L10.9,4 L12,5.1 L7.9,9.2 Z" fill="#a3a3a3" stroke-width="0.5"/></g><g transform="translate(858.8,375.55)" fill="none" stroke="#aaaaaa" stroke-width="1.3"><circle cx="5.6" cy="5.4" r="1.15"/><circle cx="10" cy="5.4" r="1.15"/><circle cx="7.8" cy="7.8" r="1"/><path d="M3,10.9 Q3.2,7.8 5.6,7.6 Q6.4,7.6 6.8,8.2 M12.6,10.9 Q12.4,7.8 10,7.6 Q9.2,7.6 8.8,8.2 M5.4,11.6 Q5.8,9.7 7.8,9.7 Q9.8,9.7 10.2,11.6"/></g><g transform="translate(878,375.55)"><path d="M3.8,4.1 H11.9" stroke="#f0544c" stroke-width="1"/><path d="M6.5,3.6 V3 H9.2 V3.6" fill="none" stroke="#f0544c" stroke-width="0.8"/><path d="M4.3,5 H11.4 L10.5,12.6 H5.2 Z" fill="#f26a62"/><rect x="6.9" y="6" width="1.9" height="5" fill="#fff" opacity="0.85"/></g><g transform="translate(839.7,398.55)" fill="none" stroke="#a3a3a3" stroke-width="0.95" stroke-linejoin="round"><path d="M7,4.9 H3.4 V11.8 H10.2 V8.4"/><path d="M6.4,9.6 L6.8,8.1 L10.9,4 L12,5.1 L7.9,9.2 Z" fill="#a3a3a3" stroke-width="0.5"/></g><g transform="translate(858.8,398.55)" fill="none" stroke="#aaaaaa" stroke-width="1.3"><circle cx="5.6" cy="5.4" r="1.15"/><circle cx="10" cy="5.4" r="1.15"/><circle cx="7.8" cy="7.8" r="1"/><path d="M3,10.9 Q3.2,7.8 5.6,7.6 Q6.4,7.6 6.8,8.2 M12.6,10.9 Q12.4,7.8 10,7.6 Q9.2,7.6 8.8,8.2 M5.4,11.6 Q5.8,9.7 7.8,9.7 Q9.8,9.7 10.2,11.6"/></g><g transform="translate(878,398.55)"><path d="M3.8,4.1 H11.9" stroke="#f0544c" stroke-width="1"/><path d="M6.5,3.6 V3 H9.2 V3.6" fill="none" stroke="#f0544c" stroke-width="0.8"/><path d="M4.3,5 H11.4 L10.5,12.6 H5.2 Z" fill="#f26a62"/><rect x="6.9" y="6" width="1.9" height="5" fill="#fff" opacity="0.85"/></g><path d="M861.6,152.8 L862.3,175" stroke="#e01b23" stroke-width="1.8"/><path d="M857.8,174 L866.8,174 L862.3,183.3 Z" fill="#e01b23"/><path d="M813.8,429 L815.7,431 L817.6,429 Z" fill="#555"/><path d="M871.4,426.8 L868.8,429.4 L871.4,432" fill="none" stroke="#555" stroke-width="0.9"/><path d="M884.8,426.8 L887.4,429.4 L884.8,432" fill="none" stroke="#555" stroke-width="0.9"/></svg>
</div></body></html>
